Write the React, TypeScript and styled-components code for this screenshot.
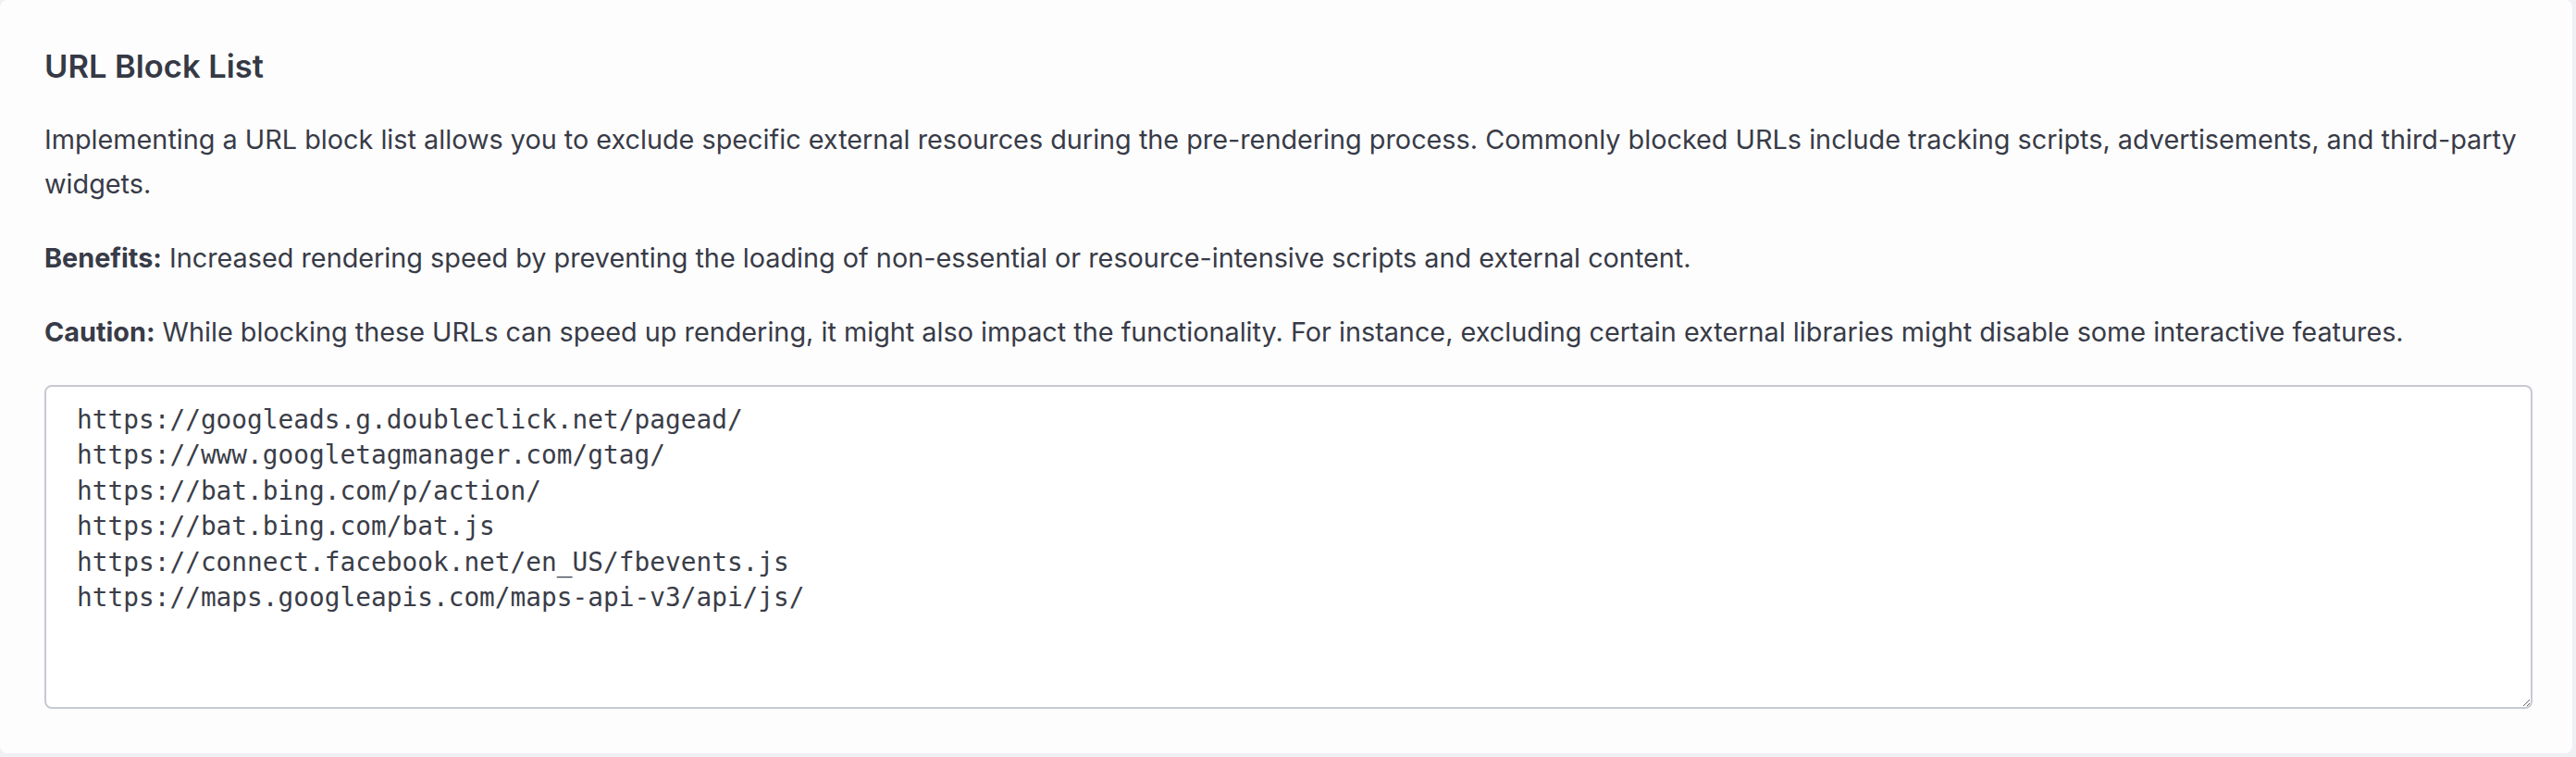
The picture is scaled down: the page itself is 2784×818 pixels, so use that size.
import React from "react";
import styled, { createGlobalStyle } from "styled-components";

const GlobalStyle = createGlobalStyle`
  html, body {
    margin: 0;
    padding: 0;
    background: #eef0f3;
  }
  * { box-sizing: border-box; }
`;

const Page = styled.div`
  padding: 0 4px 5px 0;
  background: #eef0f3;
`;

const Card = styled.section`
  background: #fdfdfd;
  border-radius: 8px;
  padding: 52px 43px 48px 48px;
  font-family: Inter, "Noto Sans", sans-serif;
  color: #383b47;
`;

const Title = styled.h2`
  margin: 0 0 35px;
  font-size: 34.5px;
  line-height: 40px;
  font-weight: 600;
  color: #363945;
`;

const Paragraph = styled.p`
  margin: 0 0 32px;
  font-size: 28.8px;
  line-height: 48px;
  font-weight: 400;
`;

const Label = styled.strong`
  font-weight: 700;
`;

const UrlArea = styled.textarea`
  display: block;
  width: 100%;
  height: 350px;
  margin-top: 33px;
  padding: 17px 33px;
  border: 2px solid #c8cad2;
  border-radius: 8px;
  background: #ffffff;
  color: #3a3d48;
  font-family: "DejaVu Sans Mono", "Liberation Mono", monospace;
  font-size: 27.8px;
  line-height: 38.4px;
  resize: both;
  outline: none;
`;

const urls = [
  "https://googleads.g.doubleclick.net/pagead/",
  "https://www.googletagmanager.com/gtag/",
  "https://bat.bing.com/p/action/",
  "https://bat.bing.com/bat.js",
  "https://connect.facebook.net/en_US/fbevents.js",
  "https://maps.googleapis.com/maps-api-v3/api/js/",
].join("\n");

export default function App() {
  return (
    <>
      <GlobalStyle />
      <Page>
        <Card>
          <Title>URL Block List</Title>
          <Paragraph>
            Implementing a URL block list allows you to exclude specific external resources during the
            pre-rendering process. Commonly blocked URLs include tracking scripts, advertisements, and
            third-party widgets.
          </Paragraph>
          <Paragraph>
            <Label>Benefits:</Label> Increased rendering speed by preventing the loading of non-essential
            or resource-intensive scripts and external content.
          </Paragraph>
          <Paragraph>
            <Label>Caution:</Label> While blocking these URLs can speed up rendering, it might also impact
            the functionality. For instance, excluding certain external libraries might disable some
            interactive features.
          </Paragraph>
          <UrlArea defaultValue={urls} spellCheck={false} />
        </Card>
      </Page>
    </>
  );
}
